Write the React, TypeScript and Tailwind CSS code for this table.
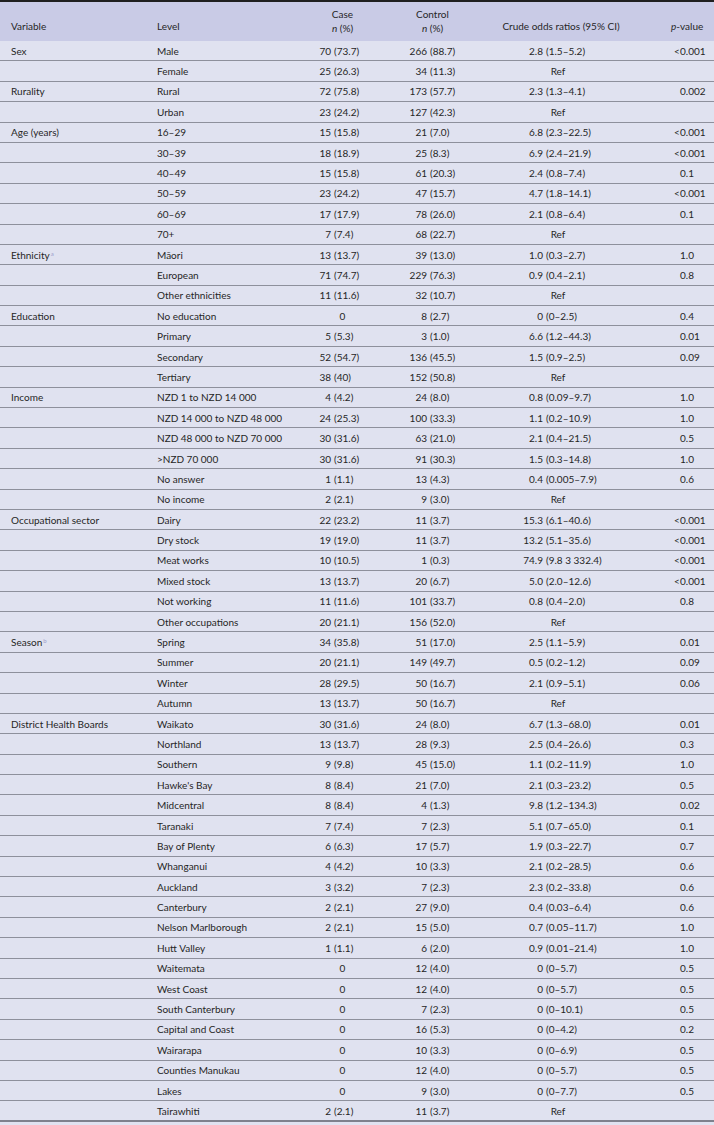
import React from "react";

type Row = { v?: string; sup?: string; l: string; c: string; k: string; o: string; p: string };

const rows: Row[] = [
  { v: "Sex", l: "Male", c: "70 (73.7)", k: "266 (88.7)", o: "2.8 (1.5–5.2)", p: "<0.001" },
  { l: "Female", c: "25 (26.3)", k: "34 (11.3)", o: "Ref", p: "" },
  { v: "Rurality", l: "Rural", c: "72 (75.8)", k: "173 (57.7)", o: "2.3 (1.3–4.1)", p: "0.002" },
  { l: "Urban", c: "23 (24.2)", k: "127 (42.3)", o: "Ref", p: "" },
  { v: "Age (years)", l: "16–29", c: "15 (15.8)", k: "21 (7.0)", o: "6.8 (2.3–22.5)", p: "<0.001" },
  { l: "30–39", c: "18 (18.9)", k: "25 (8.3)", o: "6.9 (2.4–21.9)", p: "<0.001" },
  { l: "40–49", c: "15 (15.8)", k: "61 (20.3)", o: "2.4 (0.8–7.4)", p: "0.1" },
  { l: "50–59", c: "23 (24.2)", k: "47 (15.7)", o: "4.7 (1.8–14.1)", p: "<0.001" },
  { l: "60–69", c: "17 (17.9)", k: "78 (26.0)", o: "2.1 (0.8–6.4)", p: "0.1" },
  { l: "70+", c: "7 (7.4)", k: "68 (22.7)", o: "Ref", p: "" },
  { v: "Ethnicity", sup: "a", l: "Māori", c: "13 (13.7)", k: "39 (13.0)", o: "1.0 (0.3–2.7)", p: "1.0" },
  { l: "European", c: "71 (74.7)", k: "229 (76.3)", o: "0.9 (0.4–2.1)", p: "0.8" },
  { l: "Other ethnicities", c: "11 (11.6)", k: "32 (10.7)", o: "Ref", p: "" },
  { v: "Education", l: "No education", c: "0", k: "8 (2.7)", o: "0 (0–2.5)", p: "0.4" },
  { l: "Primary", c: "5 (5.3)", k: "3 (1.0)", o: "6.6 (1.2–44.3)", p: "0.01" },
  { l: "Secondary", c: "52 (54.7)", k: "136 (45.5)", o: "1.5 (0.9–2.5)", p: "0.09" },
  { l: "Tertiary", c: "38 (40)", k: "152 (50.8)", o: "Ref", p: "" },
  { v: "Income", l: "NZD 1 to NZD 14 000", c: "4 (4.2)", k: "24 (8.0)", o: "0.8 (0.09–9.7)", p: "1.0" },
  { l: "NZD 14 000 to NZD 48 000", c: "24 (25.3)", k: "100 (33.3)", o: "1.1 (0.2–10.9)", p: "1.0" },
  { l: "NZD 48 000 to NZD 70 000", c: "30 (31.6)", k: "63 (21.0)", o: "2.1 (0.4–21.5)", p: "0.5" },
  { l: ">NZD 70 000", c: "30 (31.6)", k: "91 (30.3)", o: "1.5 (0.3–14.8)", p: "1.0" },
  { l: "No answer", c: "1 (1.1)", k: "13 (4.3)", o: "0.4 (0.005–7.9)", p: "0.6" },
  { l: "No income", c: "2 (2.1)", k: "9 (3.0)", o: "Ref", p: "" },
  { v: "Occupational sector", l: "Dairy", c: "22 (23.2)", k: "11 (3.7)", o: "15.3 (6.1–40.6)", p: "<0.001" },
  { l: "Dry stock", c: "19 (19.0)", k: "11 (3.7)", o: "13.2 (5.1–35.6)", p: "<0.001" },
  { l: "Meat works", c: "10 (10.5)", k: "1 (0.3)", o: "74.9 (9.8 3 332.4)", p: "<0.001" },
  { l: "Mixed stock", c: "13 (13.7)", k: "20 (6.7)", o: "5.0 (2.0–12.6)", p: "<0.001" },
  { l: "Not working", c: "11 (11.6)", k: "101 (33.7)", o: "0.8 (0.4–2.0)", p: "0.8" },
  { l: "Other occupations", c: "20 (21.1)", k: "156 (52.0)", o: "Ref", p: "" },
  { v: "Season", sup: "b", l: "Spring", c: "34 (35.8)", k: "51 (17.0)", o: "2.5 (1.1–5.9)", p: "0.01" },
  { l: "Summer", c: "20 (21.1)", k: "149 (49.7)", o: "0.5 (0.2–1.2)", p: "0.09" },
  { l: "Winter", c: "28 (29.5)", k: "50 (16.7)", o: "2.1 (0.9–5.1)", p: "0.06" },
  { l: "Autumn", c: "13 (13.7)", k: "50 (16.7)", o: "Ref", p: "" },
  { v: "District Health Boards", l: "Waikato", c: "30 (31.6)", k: "24 (8.0)", o: "6.7 (1.3–68.0)", p: "0.01" },
  { l: "Northland", c: "13 (13.7)", k: "28 (9.3)", o: "2.5 (0.4–26.6)", p: "0.3" },
  { l: "Southern", c: "9 (9.8)", k: "45 (15.0)", o: "1.1 (0.2–11.9)", p: "1.0" },
  { l: "Hawke's Bay", c: "8 (8.4)", k: "21 (7.0)", o: "2.1 (0.3–23.2)", p: "0.5" },
  { l: "Midcentral", c: "8 (8.4)", k: "4 (1.3)", o: "9.8 (1.2–134.3)", p: "0.02" },
  { l: "Taranaki", c: "7 (7.4)", k: "7 (2.3)", o: "5.1 (0.7–65.0)", p: "0.1" },
  { l: "Bay of Plenty", c: "6 (6.3)", k: "17 (5.7)", o: "1.9 (0.3–22.7)", p: "0.7" },
  { l: "Whanganui", c: "4 (4.2)", k: "10 (3.3)", o: "2.1 (0.2–28.5)", p: "0.6" },
  { l: "Auckland", c: "3 (3.2)", k: "7 (2.3)", o: "2.3 (0.2–33.8)", p: "0.6" },
  { l: "Canterbury", c: "2 (2.1)", k: "27 (9.0)", o: "0.4 (0.03–6.4)", p: "0.6" },
  { l: "Nelson Marlborough", c: "2 (2.1)", k: "15 (5.0)", o: "0.7 (0.05–11.7)", p: "1.0" },
  { l: "Hutt Valley", c: "1 (1.1)", k: "6 (2.0)", o: "0.9 (0.01–21.4)", p: "1.0" },
  { l: "Waitemata", c: "0", k: "12 (4.0)", o: "0 (0–5.7)", p: "0.5" },
  { l: "West Coast", c: "0", k: "12 (4.0)", o: "0 (0–5.7)", p: "0.5" },
  { l: "South Canterbury", c: "0", k: "7 (2.3)", o: "0 (0–10.1)", p: "0.5" },
  { l: "Capital and Coast", c: "0", k: "16 (5.3)", o: "0 (0–4.2)", p: "0.2" },
  { l: "Wairarapa", c: "0", k: "10 (3.3)", o: "0 (0–6.9)", p: "0.5" },
  { l: "Counties Manukau", c: "0", k: "12 (4.0)", o: "0 (0–5.7)", p: "0.5" },
  { l: "Lakes", c: "0", k: "9 (3.0)", o: "0 (0–7.7)", p: "0.5" },
  { l: "Tairawhiti", c: "2 (2.1)", k: "11 (3.7)", o: "Ref", p: "" },
];

function Split({ text, left }: { text: string; left: "c" | "k" | "o" }) {
  const i = text.indexOf(" (");
  const boxW = left === "c" ? "w-[41px]" : left === "k" ? "w-[32px]" : "w-[63px]";
  if (i < 0) {
    return <div className="w-full text-center">{text}</div>;
  }
  return (
    <div className="flex w-full">
      <span className={`${boxW} shrink-0 text-right`}>{text.slice(0, i)}</span>
      <span className="ml-[3px] whitespace-nowrap">{text.slice(i + 1)}</span>
    </div>
  );
}

export default function App() {
  return (
    <div
      className="w-[714px] h-[1125px] bg-[#e0e2f0] text-[#262626] text-[10px] leading-[14px]"
      style={{ fontFamily: "Lato, 'Noto Sans', sans-serif" }}
    >
      <div className="flex h-[41px] border-t-2 border-[#1f1f1f] bg-[#c9cbe6]">
        <div className="w-[157px] pl-[11px] flex items-end pb-[8px]">Variable</div>
        <div className="w-[133px] flex items-end pb-[8px]">Level</div>
        <div className="w-[105px] flex flex-col items-center justify-end pb-[6px]">
          <span>Case</span>
          <span>
            <i>n</i> (%)
          </span>
        </div>
        <div className="w-[85px] flex flex-col items-center justify-end pb-[6px] pr-[10px]">
          <span>Control</span>
          <span>
            <i>n</i> (%)
          </span>
        </div>
        <div className="w-[152px] flex items-end justify-center pb-[8px] pl-[10px]">
          Crude odds ratios (95% CI)
        </div>
        <div className="w-[82px] flex items-end pb-[8px] pl-[39px]">
          <span>
            <i>p</i>-value
          </span>
        </div>
      </div>
      {rows.map((r, idx) => {
        const last = idx === rows.length - 1;
        return (
          <div
            key={idx}
            className={`flex items-center h-[20.4px] ${
              last ? "border-b-2 border-[#7f818d]" : "border-b border-[#8e909c]"
            }`}
          >
            <div className="w-[157px] pl-[11px] whitespace-nowrap">
              {r.v}
              {r.sup && <sup className="text-[6px] text-[#9ea0cc] ml-[1px]">{r.sup}</sup>}
            </div>
            <div className="w-[133px] whitespace-nowrap">{r.l}</div>
            <div className="w-[105px]">
              <Split text={r.c} left="c" />
            </div>
            <div className="w-[85px]">
              <Split text={r.k} left="k" />
            </div>
            <div className="w-[152px]">
              {r.o === "Ref" ? (
                <div className="w-full text-center pl-[4px]">Ref</div>
              ) : (
                <Split text={r.o} left="o" />
              )}
            </div>
            <div className="w-[82px] pl-[48px] whitespace-nowrap">
              {r.p.startsWith("<") ? (
                <>
                  <span className="inline-block w-[6px] -ml-[6px]">&lt;</span>
                  {r.p.slice(1)}
                </>
              ) : (
                r.p
              )}
            </div>
          </div>
        );
      })}
    </div>
  );
}
